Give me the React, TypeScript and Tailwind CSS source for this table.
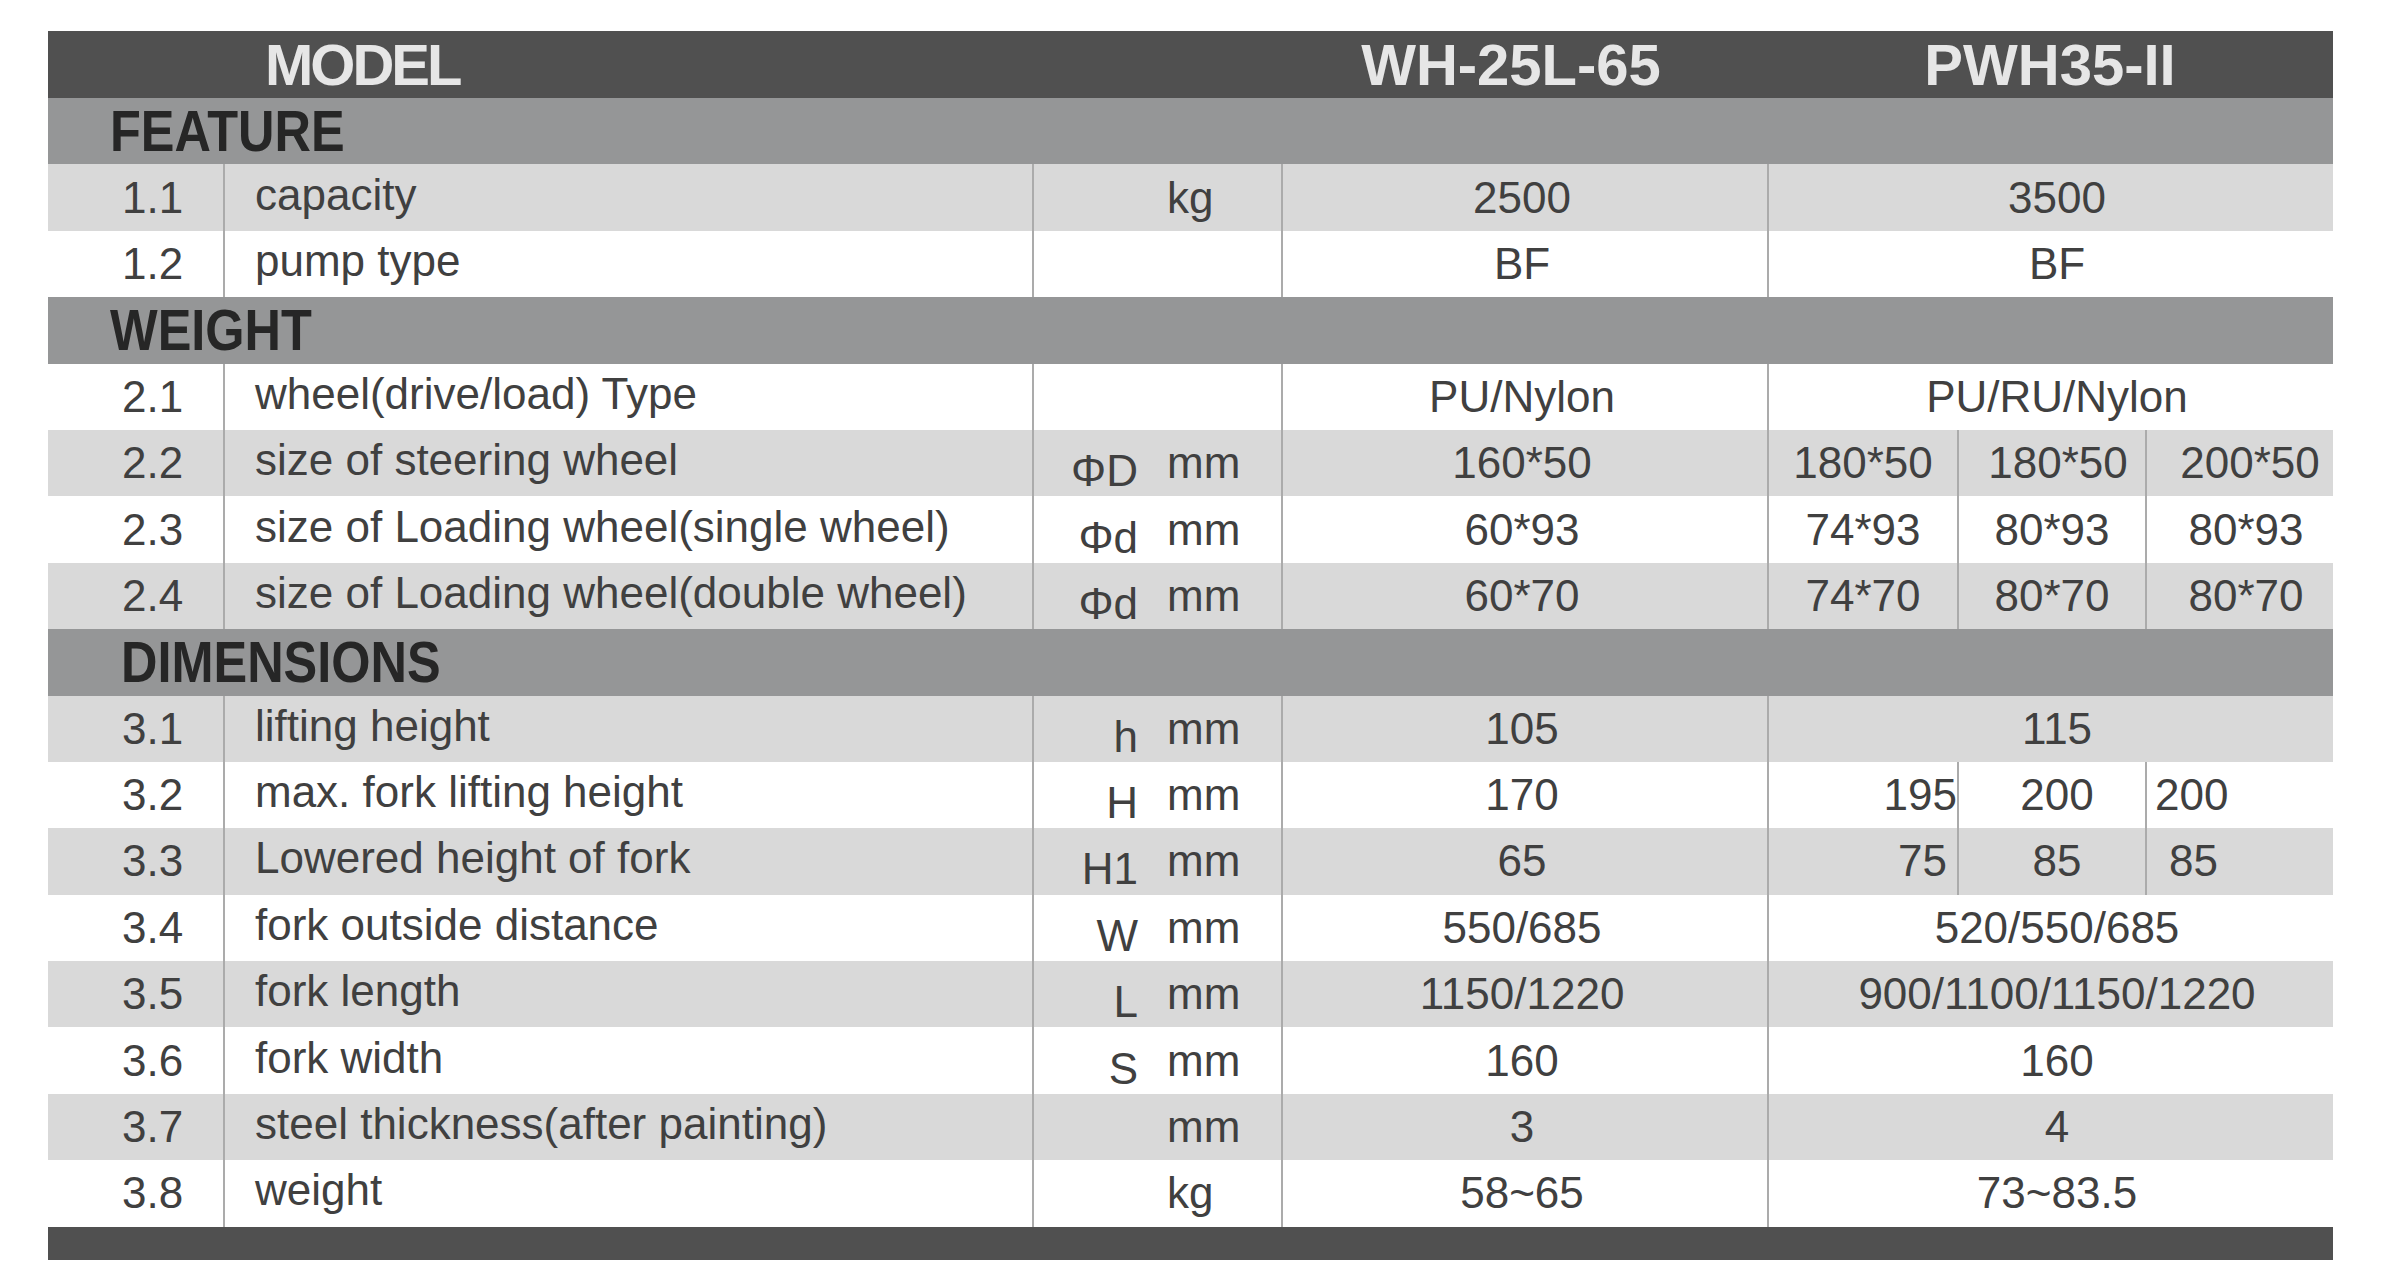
import React from 'react';

type Sub = { text: string; cls: string };
type Row = {
  no: string;
  desc: string;
  sym?: string;
  unit?: string;
  a: string;
  b: string | Sub[];
  shade?: boolean;
};
type Section = { title: string; indent: string; rows: Row[] };

const cols = 'grid grid-cols-[175px_809px_249px_486px_566px]';
const line = 'border-l-2 border-[#ababab]';

const sections: Section[] = [
  {
    title: 'FEATURE',
    indent: 'pl-[62px]',
    rows: [
      { no: '1.1', desc: 'capacity', unit: 'kg', a: '2500', b: '3500', shade: true },
      { no: '1.2', desc: 'pump type', a: 'BF', b: 'BF' },
    ],
  },
  {
    title: 'WEIGHT',
    indent: 'pl-[62px]',
    rows: [
      { no: '2.1', desc: 'wheel(drive/load) Type', a: 'PU/Nylon', b: 'PU/RU/Nylon' },
      {
        no: '2.2',
        desc: 'size of steering wheel',
        sym: 'ΦD',
        unit: 'mm',
        a: '160*50',
        b: [
          { text: '180*50', cls: 'justify-center' },
          { text: '180*50', cls: 'justify-center pl-[12px]' },
          { text: '200*50', cls: 'justify-center pl-[20px]' },
        ],
        shade: true,
      },
      {
        no: '2.3',
        desc: 'size of Loading wheel(single wheel)',
        sym: 'Φd',
        unit: 'mm',
        a: '60*93',
        b: [
          { text: '74*93', cls: 'justify-center' },
          { text: '80*93', cls: 'justify-center' },
          { text: '80*93', cls: 'justify-center pl-[12px]' },
        ],
      },
      {
        no: '2.4',
        desc: 'size of Loading wheel(double wheel)',
        sym: 'Φd',
        unit: 'mm',
        a: '60*70',
        b: [
          { text: '74*70', cls: 'justify-center' },
          { text: '80*70', cls: 'justify-center' },
          { text: '80*70', cls: 'justify-center pl-[12px]' },
        ],
        shade: true,
      },
    ],
  },
  {
    title: 'DIMENSIONS',
    indent: 'pl-[73px]',
    rows: [
      { no: '3.1', desc: 'lifting height', sym: 'h', unit: 'mm', a: '105', b: '115', shade: true },
      {
        no: '3.2',
        desc: 'max. fork lifting height',
        sym: 'H',
        unit: 'mm',
        a: '170',
        b: [
          { text: '195', cls: 'justify-end' },
          { text: '200', cls: 'justify-center pl-[10px]' },
          { text: '200', cls: 'justify-start pl-[8px]' },
        ],
      },
      {
        no: '3.3',
        desc: 'Lowered height of fork',
        sym: 'H1',
        unit: 'mm',
        a: '65',
        b: [
          { text: '75', cls: 'justify-end pr-[10px]' },
          { text: '85', cls: 'justify-center pl-[10px]' },
          { text: '85', cls: 'justify-start pl-[22px]' },
        ],
        shade: true,
      },
      { no: '3.4', desc: 'fork outside distance', sym: 'W', unit: 'mm', a: '550/685', b: '520/550/685' },
      { no: '3.5', desc: 'fork length', sym: 'L', unit: 'mm', a: '1150/1220', b: '900/1100/1150/1220', shade: true },
      { no: '3.6', desc: 'fork width', sym: 'S', unit: 'mm', a: '160', b: '160' },
      { no: '3.7', desc: 'steel thickness(after painting)', unit: 'mm', a: '3', b: '4', shade: true },
      { no: '3.8', desc: 'weight', unit: 'kg', a: '58~65', b: '73~83.5' },
    ],
  },
];

function SpecRow({ row }: { row: Row }) {
  return (
    <div className={`${cols} h-[66.4px] ${row.shade ? 'bg-[#d9d9d9]' : 'bg-white'}`}>
      <div className="flex items-center pl-[74px]">{row.no}</div>
      <div className={`flex items-center pl-[30px] ${line}`}>
        <span className="-translate-y-[3px]">{row.desc}</span>
      </div>
      <div className={`flex items-center ${line}`}>
        <span className="w-[104px] translate-y-[8px] text-right">{row.sym}</span>
        <span className="ml-[29px]">{row.unit}</span>
      </div>
      <div className={`flex items-center justify-center pr-[6px] ${line}`}>{row.a}</div>
      {typeof row.b === 'string' ? (
        <div className={`flex items-center justify-center pl-[12px] ${line}`}>{row.b}</div>
      ) : (
        <div className={`grid grid-cols-3 ${line}`}>
          {row.b.map((s, i) => (
            <div key={i} className={`flex items-center ${s.cls} ${i > 0 ? line : ''}`}>
              {s.text}
            </div>
          ))}
        </div>
      )}
    </div>
  );
}

export default function App() {
  return (
    <div className="min-h-screen bg-white pl-[48px] pt-[31px] font-['Liberation_Sans',Arial,sans-serif]">
      <div className="w-[2285px] text-[44px] leading-none text-[#404040]">
        <div className={`${cols} h-[67px] bg-[#505050] text-[58px] font-bold text-[#e6e6e6]`}>
          <div className="col-span-3 flex items-center pl-[217px] tracking-[-3px]">MODEL</div>
          <div className="flex items-center justify-center pr-[26px]">WH-25L-65</div>
          <div className="flex items-center justify-center">PWH35-II</div>
        </div>
        {sections.map((sec) => (
          <div key={sec.title}>
            <div className={`flex h-[66.4px] items-center bg-[#959697] ${sec.indent}`}>
              <span className="inline-block origin-left scale-x-[0.87] text-[58px] font-bold text-[#262626]">
                {sec.title}
              </span>
            </div>
            {sec.rows.map((r) => (
              <SpecRow key={r.no} row={r} />
            ))}
          </div>
        ))}
        <div className="h-[33px] bg-[#505050]" />
      </div>
    </div>
  );
}
